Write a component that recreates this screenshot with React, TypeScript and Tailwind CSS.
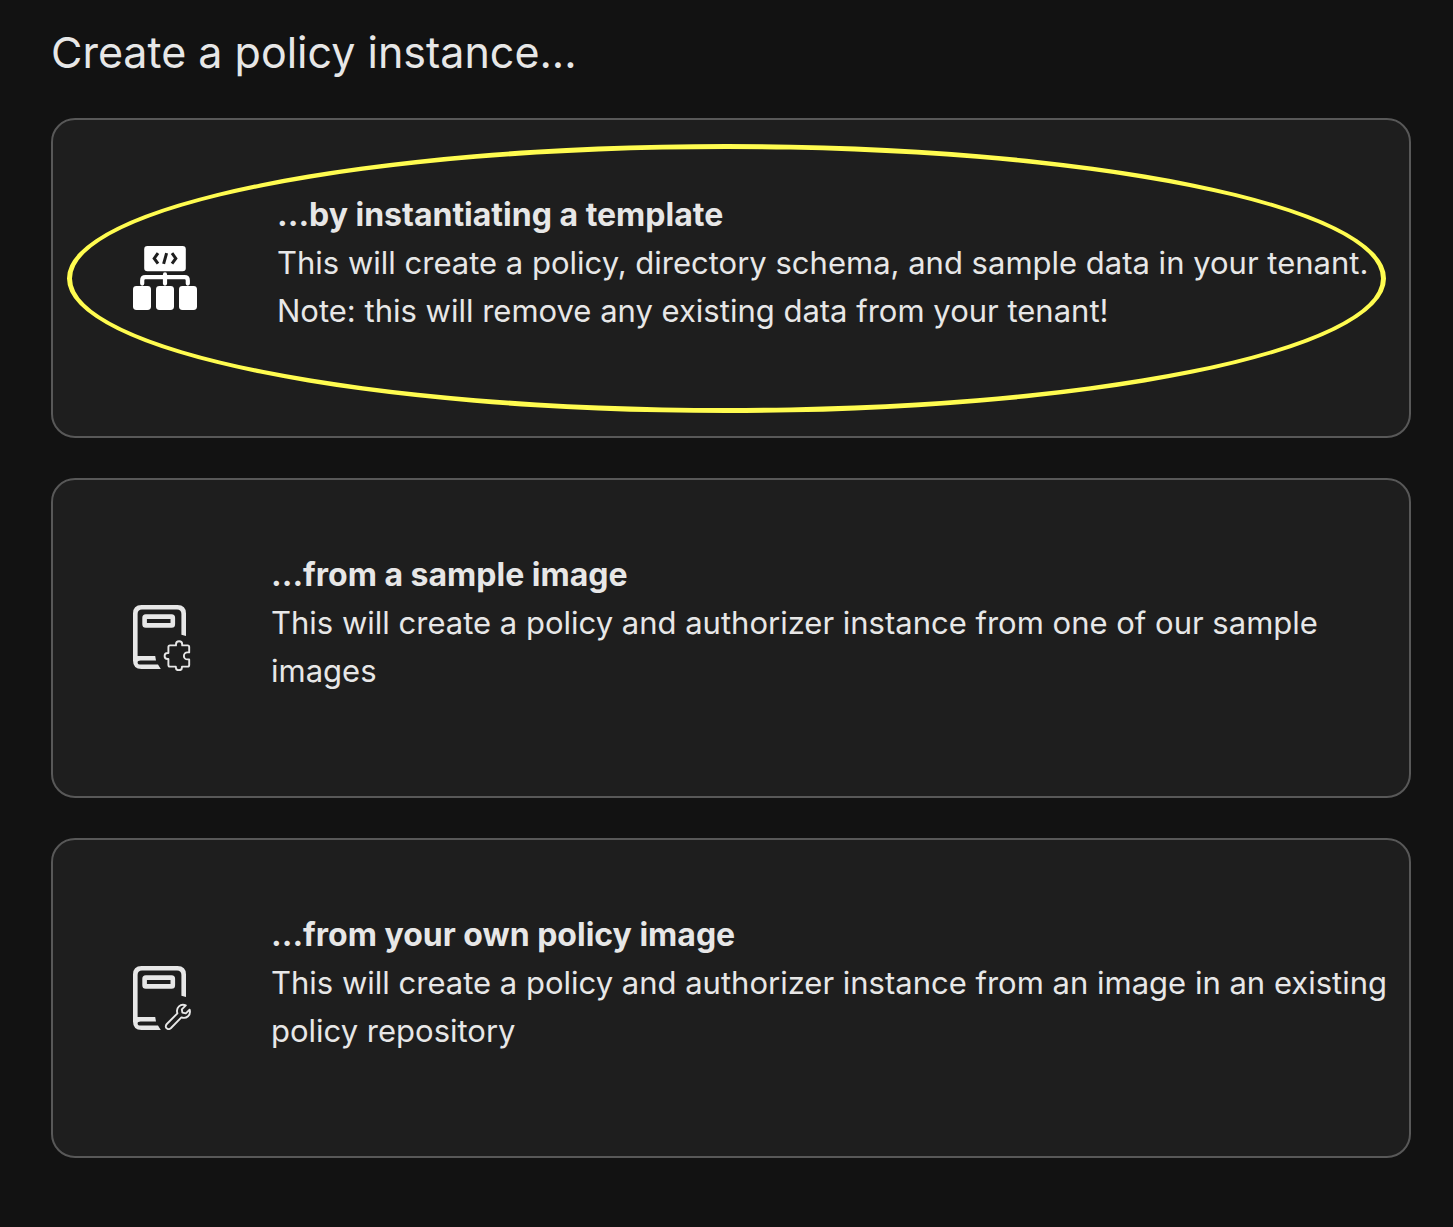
import type { ReactNode } from "react";

function TemplateIcon() {
  return (
    <svg width="64" height="64" viewBox="0 0 64 64" fill="none" aria-hidden="true" className="shrink-0">
      <rect x="11.2" y="0" width="41.6" height="25.2" rx="3.2" fill="#fff" />
      <path
        d="M25 7.2 L21.2 12.4 L25 17.6 M39 7.2 L42.8 12.4 L39 17.6 M33.6 7.2 L30.6 17.8"
        stroke="#1e1e1e"
        strokeWidth="3"
      />
      <path
        d="M9.2 37.6 V34.4 Q9.2 31.2 12.4 31.2 H51.6 Q54.8 31.2 54.8 34.4 V37.6 M32 28.4 V37.6"
        stroke="#fff"
        strokeWidth="4.2"
        strokeLinecap="round"
      />
      <rect x="0" y="40" width="18" height="24" rx="3.4" fill="#fff" />
      <rect x="23" y="40" width="18" height="24" rx="3.4" fill="#fff" />
      <rect x="46" y="40" width="18" height="24" rx="3.4" fill="#fff" />
    </svg>
  );
}

function Book() {
  return (
    <>
      <path
        d="M8.5 0 H44.5 Q53 0 53 8.5 V31 L48.4 29.8 V9 Q48.4 4.5 44 4.5 H9 Q4.6 4.5 4.6 9 V51 H22.2 L23 55.5 H7.5 Q4.6 55.5 4.6 57.4 Q4.6 59.6 8 59.6 H25 L27.8 64 H8.5 Q0 64 0 55.5 V8.5 Q0 0 8.5 0 Z"
        fill="#e7e7e7"
      />
      <rect x="11.6" y="11.6" width="28.2" height="8.8" rx="1.2" stroke="#e7e7e7" strokeWidth="4.6" />
    </>
  );
}

function SampleIcon() {
  return (
    <svg width="58" height="66" viewBox="0 0 58 66" fill="none" aria-hidden="true" className="shrink-0">
      <Book />
      <path
        d="M37 40.4 H43 V39.4 A3.1 3.1 0 0 1 49.2 39.4 V40.4 H54.6 Q56.2 40.4 56.2 42 V47.4 H54.4 A3.5 3.5 0 0 0 54.4 54.4 H56.2 V60 Q56.2 61.6 54.6 61.6 H49 V62.2 A3.1 3.1 0 0 1 42.8 62.2 V61.6 H37 Q35.4 61.6 35.4 60 V54 H34.6 A3 3 0 0 1 34.6 48 H35.4 V42 Q35.4 40.4 37 40.4 Z"
        stroke="#e7e7e7"
        strokeWidth="1.9"
        strokeLinejoin="round"
      />
    </svg>
  );
}

function OwnImageIcon() {
  return (
    <svg width="58" height="64" viewBox="0 0 58 64" fill="none" aria-hidden="true" className="shrink-0">
      <Book />
      <path
        d="M52.8 39.4 C47.6 37.2 42.6 41.6 44.4 47.4 L33.8 58 C30.8 61.4 35 64.8 38 62 L48.4 51.4 C53.6 53.2 58.2 49 56.6 43.6 L52.8 47.4 L49.4 46.6 L48.8 43.4 Z"
        stroke="#e7e7e7"
        strokeWidth="1.9"
        strokeLinejoin="round"
      />
    </svg>
  );
}

type OptionProps = {
  icon: ReactNode;
  title: string;
  highlighted?: boolean;
  children: ReactNode;
};

function Option({ icon, title, highlighted = false, children }: OptionProps) {
  return (
    <button
      type="button"
      className="relative flex min-h-80 w-full cursor-pointer items-center gap-20 rounded-3xl border-2 border-[#585858] bg-[#1e1e1e] py-10 pr-5 pl-20 text-left"
    >
      {icon}
      <span className="block min-w-0 flex-1 pb-[30px] text-[31px] leading-[48px]">
        <strong className="block text-[32px] font-bold">{title}</strong>
        <span className="block">{children}</span>
      </span>
      {highlighted && (
        <span className="pointer-events-none absolute top-6 right-[23px] bottom-[23px] left-3.5 rounded-[50%] border-[5px] border-[#fffc50]" />
      )}
    </button>
  );
}

export default function App() {
  return (
    <main className="min-h-screen bg-[#121212] pt-6 pr-[42px] pb-16 pl-[51px] font-['Inter',sans-serif] text-[#e7e7e7]">
      <h1 className="text-[43px] leading-[56px]">Create a policy instance...</h1>
      <div className="mt-[38px] flex flex-col gap-10">
        <Option icon={<TemplateIcon />} title="...by instantiating a template" highlighted>
          This will create a policy, directory schema, and sample data in your tenant.
          <br />
          Note: this will remove any existing data from your tenant!
        </Option>
        <Option icon={<SampleIcon />} title="...from a sample image">
          This will create a policy and authorizer instance from one of our sample images
        </Option>
        <Option icon={<OwnImageIcon />} title="...from your own policy image">
          This will create a policy and authorizer instance from an image in an existing policy repository
        </Option>
      </div>
    </main>
  );
}
